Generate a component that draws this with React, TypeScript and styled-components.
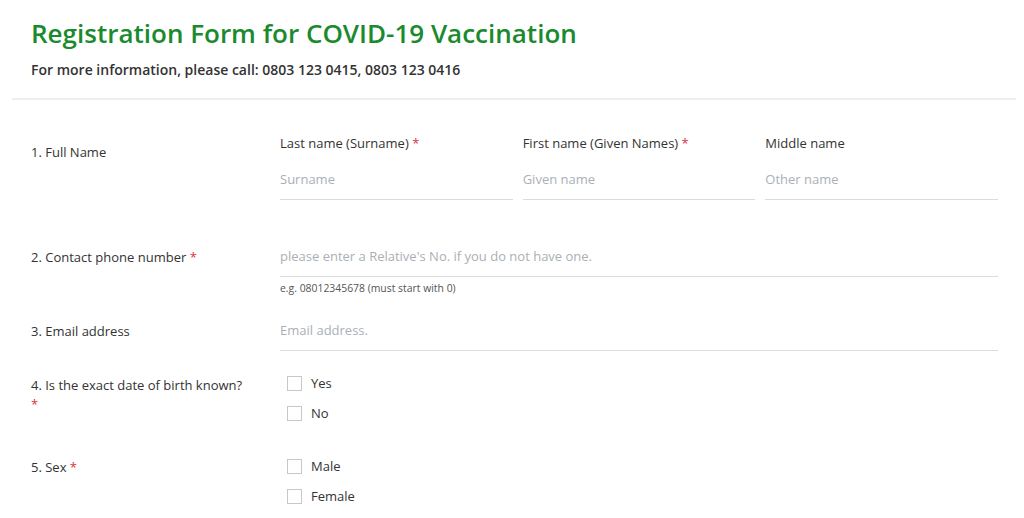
import React from "react";
import styled, { createGlobalStyle } from "styled-components";

const Global = createGlobalStyle`
  html, body { margin: 0; padding: 0; background: #fff; }
  body { font-family: "Open Sans", "Noto Sans", sans-serif; color: #333; }
  * { box-sizing: border-box; }
`;

const Page = styled.div`
  width: 1024px;
  padding: 0 8px 0 12px;
`;

const Header = styled.header`
  padding: 15px 19px 18px;
  border-bottom: 2px solid #eeeeee;
`;

const Title = styled.h1`
  margin: 0;
  font-size: 26px;
  line-height: 36px;
  font-weight: 600;
  color: #1a8a2e;
`;

const Subtitle = styled.p`
  margin: 9px 0 0;
  font-size: 14px;
  line-height: 20px;
  font-weight: 600;
  color: #333;
`;

const Form = styled.form`
  padding: 33px 18px 0 19px;
`;

const Row = styled.div<{ $mb: number }>`
  display: grid;
  grid-template-columns: 249px 1fr;
  margin-bottom: ${(p) => p.$mb}px;
`;

const Question = styled.div<{ $pt: number }>`
  padding-top: ${(p) => p.$pt}px;
  padding-right: 30px;
  font-size: 13px;
  line-height: 19px;
  color: #333;
`;

const Req = styled.span`
  color: #d8333b;
`;

const NameGrid = styled.div`
  display: grid;
  grid-template-columns: repeat(3, 1fr);
  column-gap: 10px;
`;

const Field = styled.div`
  display: flex;
  flex-direction: column;
`;

const FieldLabel = styled.label`
  font-size: 13px;
  line-height: 20px;
  color: #333;
  margin-bottom: 9px;
`;

const Input = styled.input`
  width: 100%;
  height: 38px;
  border: none;
  border-bottom: 1px solid #dcdcdc;
  padding: 0 0 3px;
  font-family: inherit;
  font-size: 13px;
  color: #333;
  background: transparent;
  outline: none;
  &::placeholder {
    color: #aab0b6;
  }
`;

const Help = styled.div`
  margin-top: 4px;
  font-size: 10.4px;
  line-height: 14px;
  color: #555;
`;

const Options = styled.div`
  display: flex;
  flex-direction: column;
  padding-left: 7px;
  padding-top: 1px;
`;

const Option = styled.label`
  display: flex;
  align-items: center;
  gap: 9px;
  height: 30px;
  font-size: 13px;
  color: #333;
`;

const Box = styled.span`
  width: 15px;
  height: 15px;
  border: 1px solid #c8c8c8;
  background: #fff;
  flex: none;
`;

export default function App() {
  return (
    <Page>
      <Global />
      <Header>
        <Title>Registration Form for COVID-19 Vaccination</Title>
        <Subtitle>For more information, please call: 0803 123 0415, 0803 123 0416</Subtitle>
      </Header>
      <Form>
        <Row $mb={39}>
          <Question $pt={10}>1. Full Name</Question>
          <NameGrid>
            <Field>
              <FieldLabel>
                Last name (Surname) <Req>*</Req>
              </FieldLabel>
              <Input placeholder="Surname" />
            </Field>
            <Field>
              <FieldLabel>
                First name (Given Names) <Req>*</Req>
              </FieldLabel>
              <Input placeholder="Given name" />
            </Field>
            <Field>
              <FieldLabel>Middle name</FieldLabel>
              <Input placeholder="Other name" />
            </Field>
          </NameGrid>
        </Row>
        <Row $mb={18}>
          <Question $pt={9}>
            2. Contact phone number <Req>*</Req>
          </Question>
          <Field>
            <Input placeholder="please enter a Relative's No. if you do not have one." />
            <Help>e.g. 08012345678 (must start with 0)</Help>
          </Field>
        </Row>
        <Row $mb={16}>
          <Question $pt={9}>3. Email address</Question>
          <Field>
            <Input placeholder="Email address." />
          </Field>
        </Row>
        <Row $mb={22}>
          <Question $pt={9}>
            4. Is the exact date of birth known? <Req>*</Req>
          </Question>
          <Options>
            <Option>
              <Box />
              <span>Yes</span>
            </Option>
            <Option>
              <Box />
              <span>No</span>
            </Option>
          </Options>
        </Row>
        <Row $mb={0}>
          <Question $pt={8}>
            5. Sex <Req>*</Req>
          </Question>
          <Options>
            <Option>
              <Box />
              <span>Male</span>
            </Option>
            <Option>
              <Box />
              <span>Female</span>
            </Option>
          </Options>
        </Row>
      </Form>
    </Page>
  );
}
